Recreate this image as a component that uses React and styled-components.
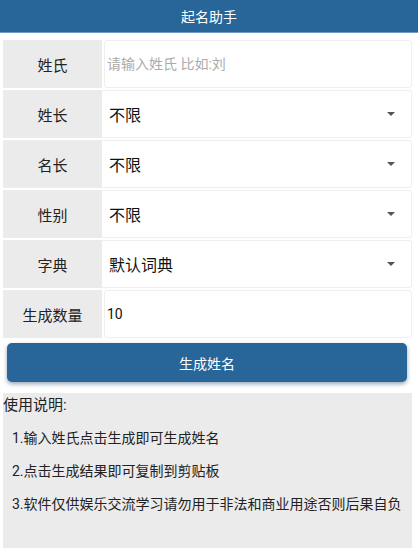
import React from "react"
import styled, { createGlobalStyle } from "styled-components"

const GlobalStyle = createGlobalStyle`
  body {
    margin: 0;
    background: #fff;
    font-family: Roboto, "Noto Sans CJK SC", sans-serif;
  }
`

const Page = styled.div`
  width: 418px;
  height: 550px;
  overflow: hidden;
`

const Header = styled.header`
  height: 32px;
  background: #286598;
  border-bottom: 1px solid #6f9bc3;
  color: #fff;
  font-size: 14px;
  display: flex;
  align-items: center;
  justify-content: center;
`

const Content = styled.main`
  padding: 7px 6px 0 3px;
  display: flex;
  flex-direction: column;
`

const Form = styled.div`
  display: flex;
  flex-direction: column;
  gap: 2px;
`

const Row = styled.div`
  display: grid;
  grid-template-columns: 99px 1fr;
  height: 48px;
`

const Label = styled.div`
  background: #ebebeb;
  color: #222;
  font-size: 15px;
  display: flex;
  align-items: center;
  justify-content: center;
`

const Input = styled.input`
  margin-left: 2px;
  box-sizing: border-box;
  height: 100%;
  border: 1px solid #efefef;
  border-radius: 3px;
  padding: 0 0 0 2px;
  font-family: inherit;
  font-size: 14px;
  color: #111;
  outline: none;

  &::placeholder {
    color: #ababab;
  }
`

const Select = styled.div`
  position: relative;
  box-sizing: border-box;
  border: 1px solid #efefef;
  border-left: none;
  border-radius: 0 3px 3px 0;
  padding-left: 7px;
  display: flex;
  align-items: center;
  font-size: 16px;
  color: #111;

  &::after {
    content: "";
    position: absolute;
    right: 16px;
    top: 50%;
    margin-top: -2px;
    border-left: 4px solid transparent;
    border-right: 4px solid transparent;
    border-top: 4px solid #555;
  }
`

const Button = styled.button`
  margin: 5px 5px 0 4px;
  height: 39px;
  border: none;
  border-radius: 5px;
  background: #286598;
  color: #fff;
  font-family: inherit;
  font-size: 14px;
  box-shadow: 0 2px 4px rgba(20, 60, 100, 0.45);
`

const Notes = styled.section`
  margin-top: 11px;
  height: 155px;
  background: #ebebeb;
  color: #222;
  font-size: 14px;
  padding-top: 2px;
  box-sizing: border-box;
`

const NotesTitle = styled.div`
  font-size: 15px;
  line-height: 20px;
`

const Note = styled.p`
  margin: 0;
  padding-left: 9px;
  line-height: 33px;

  &:first-of-type {
    margin-top: 7px;
  }
`

const selects = [
  ["姓长", "不限"],
  ["名长", "不限"],
  ["性别", "不限"],
  ["字典", "默认词典"],
]

const notes = [
  "1.输入姓氏点击生成即可生成姓名",
  "2.点击生成结果即可复制到剪贴板",
  "3.软件仅供娱乐交流学习请勿用于非法和商业用途否则后果自负",
]

export default () => (
  <Page>
    <GlobalStyle />
    <Header>起名助手</Header>
    <Content>
      <Form>
        <Row>
          <Label>姓氏</Label>
          <Input placeholder="请输入姓氏 比如:刘" />
        </Row>
        {selects.map(([label, value]) => (
          <Row key={label}>
            <Label>{label}</Label>
            <Select>{value}</Select>
          </Row>
        ))}
        <Row>
          <Label>生成数量</Label>
          <Input defaultValue="10" />
        </Row>
      </Form>
      <Button>生成姓名</Button>
      <Notes>
        <NotesTitle>使用说明:</NotesTitle>
        {notes.map(n => (
          <Note key={n}>{n}</Note>
        ))}
      </Notes>
    </Content>
  </Page>
)
